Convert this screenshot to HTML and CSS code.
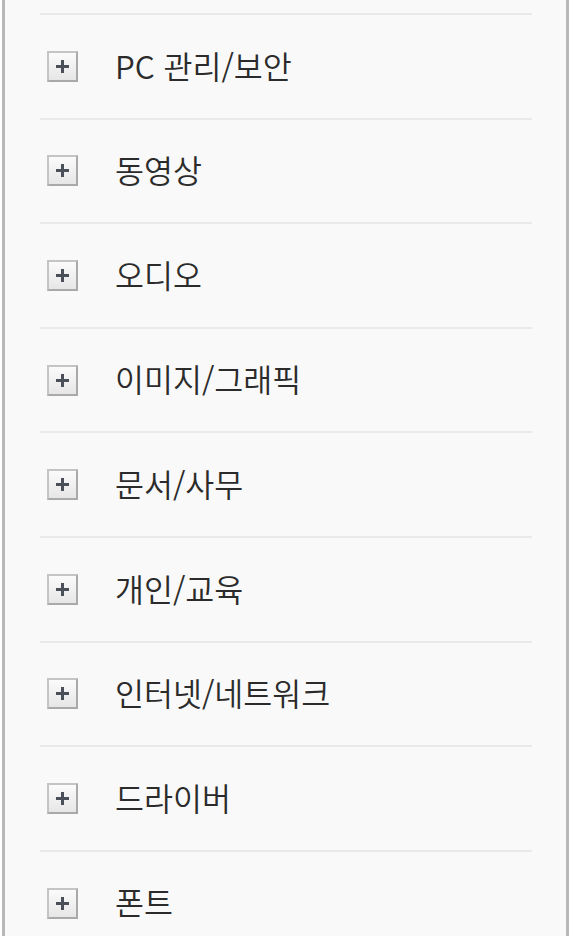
FILE: index.html
```html
<!DOCTYPE html>
<html lang="ko">
<head>
<meta charset="utf-8">
<link rel="stylesheet" href="styles.css">
</head>
<body>
<div class="panel">
  <ul class="cat-list">
    <li class="cat"><span class="plus"></span><span class="label">PC 관리/보안</span></li>
    <li class="cat"><span class="plus"></span><span class="label">동영상</span></li>
    <li class="cat"><span class="plus"></span><span class="label">오디오</span></li>
    <li class="cat"><span class="plus"></span><span class="label">이미지/그래픽</span></li>
    <li class="cat"><span class="plus"></span><span class="label">문서/사무</span></li>
    <li class="cat"><span class="plus"></span><span class="label">개인/교육</span></li>
    <li class="cat"><span class="plus"></span><span class="label">인터넷/네트워크</span></li>
    <li class="cat"><span class="plus"></span><span class="label">드라이버</span></li>
    <li class="cat"><span class="plus"></span><span class="label">폰트</span></li>
  </ul>
</div>
</body>
</html>
```
FILE: styles.css
```css
html, body {
  margin: 0;
  padding: 0;
  background: #ffffff;
  height: 936px;
  overflow: hidden;
}
.panel {
  margin-left: 2px;
  width: 567px;
  height: 936px;
  box-sizing: border-box;
  border-left: 3px solid #b8b8b8;
  border-right: 3px solid #b8b8b8;
  background: #f9f9f9;
  padding: 13px 34px 0 35px;
  font-family: "Noto Sans CJK KR", "Noto Sans", sans-serif;
}
.cat-list {
  list-style: none;
  margin: 0;
  padding: 0;
}
.cat {
  display: flex;
  align-items: center;
  height: 104.6px;
  box-sizing: border-box;
  border-top: 2px solid #e9e9e9;
  padding-left: 7px;
}
.plus {
  position: relative;
  width: 31px;
  height: 31px;
  box-sizing: border-box;
  border: 2px solid #a9a9a9;
  border-top-color: #c4c4c4;
  border-left-color: #c4c4c4;
  background: linear-gradient(#fbfbfb, #e6e6e6);
  margin-right: 37px;
  flex: none;
}
.plus::before,
.plus::after {
  content: "";
  position: absolute;
  background: #4a4f5a;
}
.plus::before {
  left: 7px;
  top: 12px;
  width: 13px;
  height: 3px;
}
.plus::after {
  left: 12px;
  top: 7px;
  width: 3px;
  height: 13px;
}
.label {
  font-size: 31.5px;
  font-weight: 350;
  color: #2b2b2b;
  line-height: 1;
  margin-top: -2px;
}
```
